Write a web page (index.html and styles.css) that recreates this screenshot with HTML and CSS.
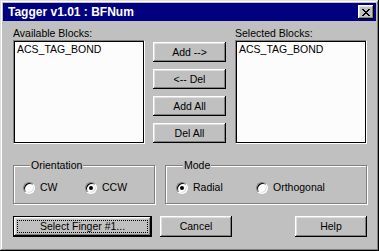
FILE: index.html
```html
<!DOCTYPE html>
<html lang="en">
<head>
    <meta charset="UTF-8">
    <title>Tagger v1.01 : BFNum</title>
    <link rel="stylesheet" href="styles.css">
</head>
<body>
    <div class="window">
        <div class="titlebar">
            <span class="title">Tagger v1.01 : BFNum</span>
            <span class="close">
                <svg width="8" height="7" viewBox="0 0 8 7">
                    <path d="M0 0h2v1h1v1h2v-1h1v-1h2v1h-1v1h-1v1h-1v1h1v1h1v1h1v1h-2v-1h-1v-1h-2v1h-1v1h-2v-1h1v-1h1v-1h1v-1h-1v-1h-1v-1h-1z" fill="#000"/>
                </svg>
            </span>
        </div>

        <div class="client">
            <div class="lists">
                <div class="list-col">
                    <div class="label">Available Blocks:</div>
                    <div class="listbox"><div class="item">ACS_TAG_BOND</div></div>
                </div>
                <div class="btn-col">
                    <div class="btn">Add --&gt;</div>
                    <div class="btn">&lt;-- Del</div>
                    <div class="btn">Add All</div>
                    <div class="btn">Del All</div>
                </div>
                <div class="list-col">
                    <div class="label">Selected Blocks:</div>
                    <div class="listbox"><div class="item">ACS_TAG_BOND</div></div>
                </div>
            </div>

            <div class="groups">
                <fieldset class="group orient">
                    <legend>Orientation</legend>
                    <div class="radio-row">
                        <div class="radio w-cw"><span class="knob"></span>CW</div>
                        <div class="radio"><span class="knob on"></span>CCW</div>
                    </div>
                </fieldset>
                <fieldset class="group mode">
                    <legend>Mode</legend>
                    <div class="radio-row">
                        <div class="radio w-radial"><span class="knob on"></span>Radial</div>
                        <div class="radio"><span class="knob"></span>Orthogonal</div>
                    </div>
                </fieldset>
            </div>

            <div class="actions">
                <div class="btn wide default"><span class="focus">Select Finger #1...</span></div>
                <div class="btn">Cancel</div>
                <div class="spacer"></div>
                <div class="btn">Help</div>
            </div>
        </div>
    </div>
</body>
</html>
```

FILE: styles.css
```css
:root {
    --face: #c0c0c0;
    --light: #dfdfdf;
    --shadow: #808080;
    --navy: #000080;
}

* {
    margin: 0;
    padding: 0;
    box-sizing: border-box;
}

body {
    width: 379px;
    height: 251px;
    background: var(--face);
    font-family: 'Liberation Sans', Arial, sans-serif;
    font-size: 10.5px;
    line-height: 13px;
    color: #000;
}

.window {
    width: 379px;
    height: 251px;
    padding: 3px;
    background: var(--face);
    box-shadow: inset -1px -1px #000, inset 1px 1px var(--light),
                inset -2px -2px var(--shadow), inset 2px 2px #fff;
}

.titlebar {
    height: 18px;
    background: var(--navy);
    display: flex;
    align-items: center;
    padding-left: 5px;
}

.title {
    flex: 1;
    color: #fff;
    font-weight: bold;
    font-size: 12px;
}

.close {
    width: 16px;
    height: 14px;
    margin-right: 2px;
    background: var(--face);
    display: flex;
    align-items: center;
    justify-content: center;
    box-shadow: inset -1px -1px #000, inset 1px 1px #fff,
                inset -2px -2px var(--shadow), inset 2px 2px var(--light);
}

.close svg {
    display: block;
}

.client {
    padding: 6px 9px 0 10px;
}

/* block lists */
.lists {
    display: flex;
    height: 118px;
}

.list-col {
    width: 132px;
}

.label {
    height: 13px;
}

.listbox {
    height: 104px;
    background: #fcfcfc;
    border: 1px solid;
    border-color: var(--shadow) #fff #fff var(--shadow);
    box-shadow: inset 1px 1px #000, inset -1px -1px #000;
    padding: 2px 3px;
}

.btn-col {
    width: 73px;
    margin: 0 9px 0 8px;
    padding-top: 15px;
    display: flex;
    flex-direction: column;
    gap: 7px;
}

.btn {
    height: 20px;
    display: flex;
    align-items: center;
    justify-content: center;
    background: var(--face);
    box-shadow: inset -1px -1px #000, inset 1px 1px #fff,
                inset -2px -2px var(--shadow), inset 2px 2px var(--light);
}

/* group boxes */
.groups {
    display: flex;
    gap: 10px;
    margin-top: 14px;
}

.group {
    height: 45px;
    border: 1px solid var(--shadow);
    box-shadow: inset 1px 1px #fff, 1px 1px #fff;
    padding: 0 0 0 9px;
}

.group legend {
    margin-left: 7px;
    padding: 0 1px;
    background: var(--face);
    line-height: 13px;
}

.orient {
    width: 142px;
}

.mode {
    width: 202px;
    padding-left: 10px;
}

.radio-row {
    display: flex;
    align-items: center;
    margin-top: 9px;
    height: 13px;
}

.radio {
    display: flex;
    align-items: center;
    gap: 5px;
}

.w-cw {
    width: 62px;
}

.w-radial {
    width: 80px;
}

.knob {
    width: 12px;
    height: 12px;
    border-radius: 50%;
    background: #fff;
    border: 1px solid;
    border-color: var(--shadow) #fff #fff var(--shadow);
    box-shadow: inset 1px 1px #000, inset -1px -1px var(--light);
    display: flex;
    align-items: center;
    justify-content: center;
}

.knob.on::after {
    content: '';
    width: 4px;
    height: 4px;
    border-radius: 50%;
    background: #000;
}

/* dialog buttons */
.actions {
    display: flex;
    gap: 8px;
    margin-top: 12px;
}

.actions .btn {
    width: 72px;
    height: 21px;
}

.actions .wide {
    width: 139px;
}

.default {
    border: 1px solid #000;
    padding: 3px;
}

.focus {
    flex: 1;
    align-self: stretch;
    display: flex;
    align-items: center;
    justify-content: center;
    outline: 1px dotted #000;
    outline-offset: -1px;
}

.spacer {
    flex: 1;
}
```
